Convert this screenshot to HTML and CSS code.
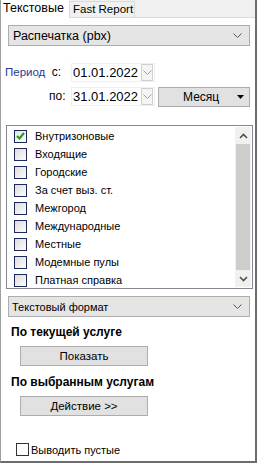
FILE: index.html
```html
<!DOCTYPE html>
<html lang="ru">
<head>
  <meta charset="UTF-8" />
  <title>Отчеты</title>
  <link rel="stylesheet" href="styles.css">
</head>
<body>
  <div class="window">
    <div class="tabs">
      <div class="tab active">Текстовые</div>
      <div class="tab">Fast Report</div>
    </div>

    <div class="page">
      <div class="combo big">
        <span>Распечатка (pbx)</span>
        <svg class="chev" width="9" height="6" viewBox="0 0 9 6"><path d="M0.5 0.5 L4.5 4.5 L8.5 0.5" fill="none" stroke="#555" stroke-width="1"/></svg>
      </div>

      <div class="period">
        <span class="plabel">Период</span>
        <span class="pside">с:</span>
        <div class="date">
          <span>01.01.2022</span>
          <span class="dbtn"><svg width="9" height="6" viewBox="0 0 9 6"><path d="M0.5 0.5 L4.5 4.5 L8.5 0.5" fill="none" stroke="#a0a0a0" stroke-width="1"/></svg></span>
        </div>
        <span></span>

        <span></span>
        <span class="pside">по:</span>
        <div class="date">
          <span>31.01.2022</span>
          <span class="dbtn"><svg width="9" height="6" viewBox="0 0 9 6"><path d="M0.5 0.5 L4.5 4.5 L8.5 0.5" fill="none" stroke="#a0a0a0" stroke-width="1"/></svg></span>
        </div>
        <div class="month">
          <span>Месяц</span>
          <svg width="7" height="4" viewBox="0 0 7 4"><path d="M0 0 H7 L3.5 4 Z" fill="#000"/></svg>
        </div>
      </div>

      <div class="list">
        <div class="items">
          <label class="item"><span class="cb checked"><svg width="9" height="8" viewBox="0 0 9 8"><path d="M1 4 L3.5 6.5 L8 1" fill="none" stroke="#1d9a1d" stroke-width="2"/></svg></span>Внутризоновые</label>
          <label class="item"><span class="cb"></span>Входящие</label>
          <label class="item"><span class="cb"></span>Городские</label>
          <label class="item"><span class="cb"></span>За счет выз. ст.</label>
          <label class="item"><span class="cb"></span>Межгород</label>
          <label class="item"><span class="cb"></span>Международные</label>
          <label class="item"><span class="cb"></span>Местные</label>
          <label class="item"><span class="cb"></span>Модемные пулы</label>
          <label class="item"><span class="cb"></span>Платная справка</label>
        </div>
        <div class="scroll">
          <div class="arrow"><svg width="9" height="6" viewBox="0 0 9 6"><path d="M1 5 L4.5 1.5 L8 5" fill="none" stroke="#505050" stroke-width="1.6"/></svg></div>
          <div class="thumb"></div>
          <div class="arrow"><svg width="9" height="6" viewBox="0 0 9 6"><path d="M1 1 L4.5 4.5 L8 1" fill="none" stroke="#505050" stroke-width="1.6"/></svg></div>
        </div>
      </div>

      <div class="combo">
        <span>Текстовый формат</span>
        <svg class="chev" width="9" height="6" viewBox="0 0 9 6"><path d="M0.5 0.5 L4.5 4.5 L8.5 0.5" fill="none" stroke="#555" stroke-width="1"/></svg>
      </div>

      <div class="caption">По текущей услуге</div>
      <button class="btn">Показать</button>

      <div class="caption">По выбранным услугам</div>
      <button class="btn">Действие &gt;&gt;</button>

      <label class="empty"><span class="cb plain"></span>Выводить пустые</label>
    </div>
  </div>
</body>
</html>
```

FILE: styles.css
```css
* { box-sizing: border-box; }
body { margin: 0; background: #fff; font-family: 'Liberation Sans', Arial, sans-serif; font-size: 11px; color: #000; }

.window {
  width: 257px; height: 463px;
  border-left: 1px solid #a0a0a0;
  border-right: 2px solid #6d6d6d;
  border-bottom: 2px solid #6d6d6d;
  display: flex; flex-direction: column;
}

.tabs {
  height: 18px; background: #f0f0f0;
  border-bottom: 1px solid #dadada;
  display: flex; align-items: flex-end;
}
.tab {
  height: 16px; width: 66px; padding: 0 0 0 3px;
  font-size: 11.5px; line-height: 15px;
  border: 1px solid #dadada; border-bottom: none;
  background: #f0f0f0;
}
.tab.active {
  height: 18px; margin-bottom: -1px; width: 68px;
  padding: 0 2px; line-height: 16px; font-size: 12.5px;
  background: #fff; border: none;
}

.page { flex: 1; display: flex; flex-direction: column; padding: 0 4px 0 4px; }

.combo {
  margin: 7px 0 0 3px; width: 242px; height: 21px;
  background: #e5e5e5; border: 1px solid #adadad;
  display: flex; align-items: center; justify-content: space-between;
  padding: 0 7px 0 3px;
}
.combo.big { font-size: 12.5px; }
.combo.big span { padding-left: 1px; }

.period {
  margin-top: 17px;
  display: grid;
  grid-template-columns: 44px 12px 84px 92px;
  grid-template-rows: 19px 20px;
  row-gap: 5px;
  align-items: start;
  font-size: 12px;
}
.plabel { color: #1e3a9a; line-height: 19px; font-size: 11.5px; }
.pside { text-align: right; line-height: 19px; }
.date {
  margin-left: 10px; width: 84px; height: 19px;
  background: #fff; border: 1px solid #efefef;
  display: flex; align-items: center; justify-content: space-between;
  padding-left: 1px; font-size: 13px;
}
.dbtn {
  width: 12px; height: 17px; margin-right: 1px;
  border: 1px solid #cfcfcf; background: #f4f4f4;
  display: flex; align-items: center; justify-content: center;
}
.month {
  margin-left: 13px; width: 92px; height: 20px;
  background: #e1e1e1; border: 1px solid #adadad;
  display: flex; align-items: center; justify-content: space-between;
  padding: 0 5px 0 24px;
}

.list {
  margin-top: 18px; margin-left: 1px; width: 247px; height: 164px;
  border: 1px solid #828790;
  display: flex; padding: 1px;
}
.items { flex: 1; }
.item {
  height: 18px; display: flex; align-items: center;
  padding-left: 6px;
}
.cb {
  width: 13px; height: 13px; margin-right: 8px;
  border: 1px solid #1c2a5a;
  background: linear-gradient(135deg, #dcdcdc, #fdfdfd);
  display: flex; align-items: center; justify-content: center;
}
.cb.checked { background: linear-gradient(135deg, #e4e4e4, #fdfdfd); }

.scroll { width: 16px; display: flex; flex-direction: column; background: #f0f0f0; }
.arrow { height: 17px; display: flex; align-items: center; justify-content: center; }
.thumb { flex: 1; background: #cdcdcd; margin: 0 1px; }

.caption { font-weight: bold; font-size: 12px; margin: 8px 0 0 6px; line-height: 14px; }

.btn {
  margin: 7px 0 0 15px; width: 128px; height: 20px;
  background: #e1e1e1; border: 1px solid #adadad;
  font-family: inherit; font-size: 11.5px; color: #000; padding: 0;
}
.btn + .caption { margin-top: 9px; }

.empty {
  margin-top: auto; margin-bottom: 5px;
  display: flex; align-items: center; padding-left: 11px;
}
.cb.plain { background: #fff; border-color: #333; margin-right: 2px; }
```
